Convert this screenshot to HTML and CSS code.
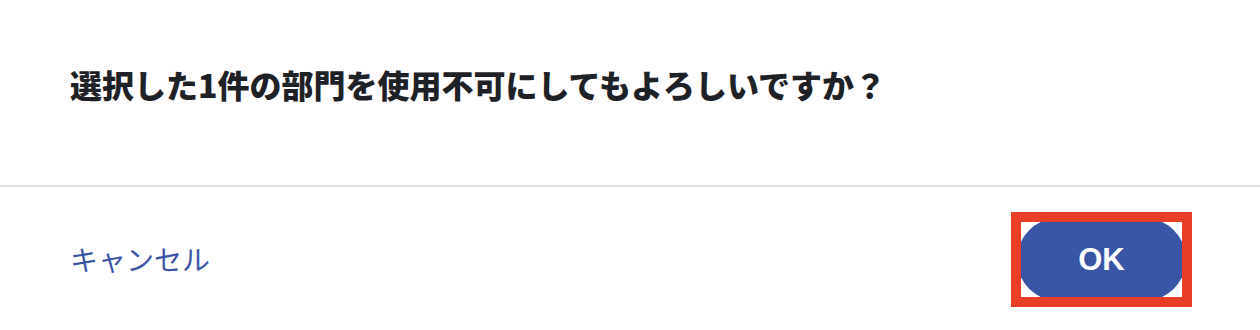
FILE: index.html
```html
<!DOCTYPE html>
<html lang="ja">
<head>
<meta charset="utf-8">
<link rel="stylesheet" href="styles.css">
</head>
<body>
<div class="dialog">
  <div class="dialog-body">
    <p class="message">選択した1件の部門を使用不可にしてもよろしいですか？</p>
  </div>
  <div class="dialog-footer">
    <a class="cancel" href="#">キャンセル</a>
    <div class="highlight">
      <button class="ok" type="button">OK</button>
    </div>
  </div>
</div>
</body>
</html>
```
FILE: styles.css
```css
html, body {
  margin: 0;
  padding: 0;
  background: #ffffff;
}
.dialog {
  width: 1260px;
  height: 330px;
  display: flex;
  flex-direction: column;
  font-family: "Noto Sans CJK JP", "Noto Sans", sans-serif;
}
.dialog-body {
  height: 185px;
  display: flex;
  align-items: center;
  padding-left: 70px;
  border-bottom: 2px solid #dcdee3;
  box-sizing: content-box;
}
.message {
  margin: 0 0 17px 0;
  font-size: 32px;
  font-weight: 900;
  color: #1e2226;
  line-height: 1;
}
.dialog-footer {
  flex: 1;
  display: flex;
  align-items: center;
  justify-content: space-between;
  padding: 0 68px 0 70px;
}
.cancel {
  font-size: 28px;
  color: #3a55a6;
  text-decoration: none;
  line-height: 1;
}
.highlight {
  width: 161px;
  height: 75px;
  border: 10px solid #e83e27;
  overflow: hidden;
  margin-top: 2px;
}
.ok {
  display: block;
  width: 169px;
  height: 83px;
  margin: -4px;
  border: none;
  border-radius: 42px;
  background: #3955a6;
  color: #ffffff;
  font-family: "Liberation Sans", Arial, sans-serif;
  font-weight: 700;
  font-size: 31px;
  padding: 0;
}
```
